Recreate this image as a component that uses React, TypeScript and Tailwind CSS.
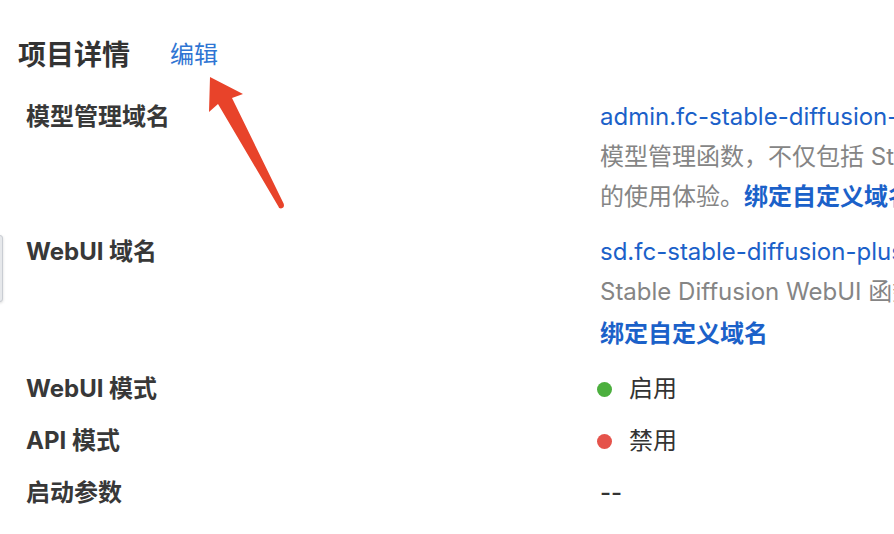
import React from 'react';

// Project detail panel with an annotation arrow pointing at the edit link
const labelCls = 'font-bold text-[#383838] text-[24px] leading-[40px] whitespace-nowrap';
const linkCls = 'text-[#1b61c9] text-[24px] leading-[40px] whitespace-nowrap';
const descCls = 'text-[#858585] text-[24px] leading-[40px] whitespace-nowrap';

const StatusDot: React.FC<{ color: string; text: string }> = ({ color, text }) => (
  <div className="flex items-center h-[40px]">
    <span className={`w-[15px] h-[15px] rounded-full ${color} ml-[-3px]`} />
    <span className="ml-[17px] text-[24px] text-[#333] leading-[40px]">{text}</span>
  </div>
);

export default function App() {
  return (
    <div className="relative w-[894px] h-[534px] overflow-hidden bg-white font-[Inter,'Noto_Sans_CJK_SC',sans-serif]">
      {/* Title */}
      <div className="flex items-center pl-[18px] pt-[37px] h-[73px]">
        <h1 className="text-[28px] font-bold text-[#333] leading-[36px]">项目详情</h1>
        <a className="ml-[40px] text-[24px] text-[#2f75d3] leading-[36px] cursor-pointer">编辑</a>
      </div>

      {/* Detail rows */}
      <div className="mt-[24px] pl-[26px] flex flex-col">
        <div className="grid grid-cols-[574px_1fr] mb-[15px]">
          <div className={labelCls}>模型管理域名</div>
          <div>
            <div className={linkCls}>admin.fc-stable-diffusion-plus.1234567890.cn-hangzhou.fcapp.run</div>
            <div className={descCls}>模型管理函数，不仅包括 Stable Diffusion 的模型管理，还提供了更加友好</div>
            <div className={descCls}>
              的使用体验。<span className="font-bold text-[#1b61c9]">绑定自定义域名</span>
            </div>
          </div>
        </div>

        <div className="grid grid-cols-[574px_1fr] mb-[15px]">
          <div className={labelCls}>WebUI 域名</div>
          <div>
            <div className={linkCls}>sd.fc-stable-diffusion-plus.1234567890.cn-hangzhou.fcapp.run</div>
            <div className={descCls}>Stable Diffusion WebUI 函数，提供原生的 WebUI 使用体验</div>
            <div className={`${linkCls} font-bold mt-[2px]`}>绑定自定义域名</div>
          </div>
        </div>

        <div className="grid grid-cols-[574px_1fr] mb-[12px]">
          <div className={labelCls}>WebUI 模式</div>
          <StatusDot color="bg-[#4caf3e]" text="启用" />
        </div>

        <div className="grid grid-cols-[574px_1fr] mb-[12px]">
          <div className={labelCls}>API 模式</div>
          <StatusDot color="bg-[#e5534b]" text="禁用" />
        </div>

        <div className="grid grid-cols-[574px_1fr]">
          <div className={labelCls}>启动参数</div>
          <div className="text-[24px] font-medium text-[#333] leading-[40px]">--</div>
        </div>
      </div>

      {/* Side drawer handle peeking in from the left */}
      <div className="absolute left-[-10px] top-[235px] w-[13px] h-[67px] rounded-[3px] bg-[#e6e8eb] border border-[#c9cdd3] shadow-[0_1px_3px_rgba(0,0,0,0.15)]" />

      {/* Annotation arrow */}
      <svg className="absolute inset-0 pointer-events-none" width="894" height="534" viewBox="0 0 894 534">
        <path
          d="M210 77 L243 94 L232 98 L283.6 203.6 Q285 208 281 208.5 Q278.5 208.5 278.4 206.4 L218 104 L209 112 Z"
          fill="#e8432a"
        />
      </svg>
    </div>
  );
}
